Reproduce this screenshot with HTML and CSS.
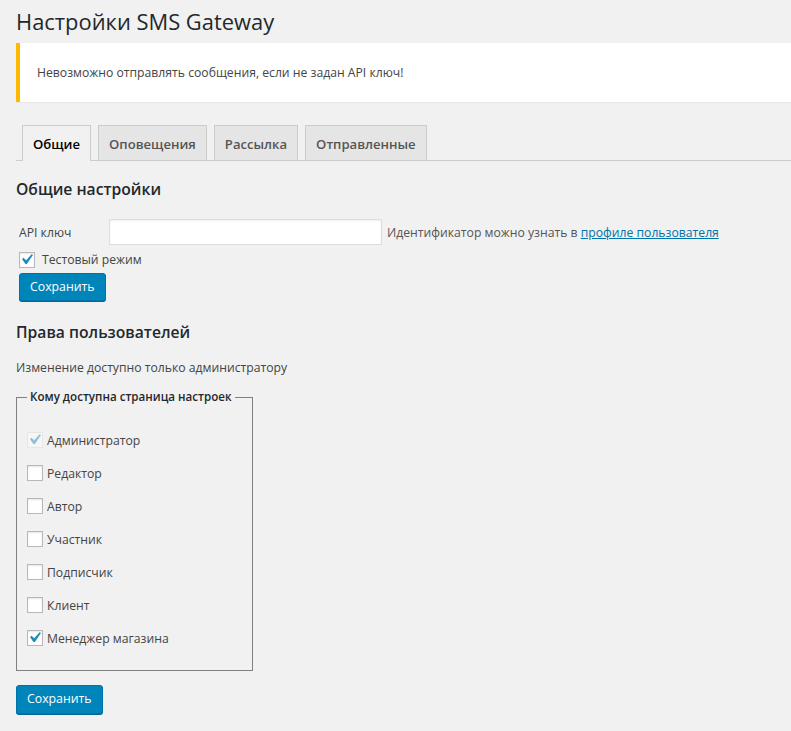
FILE: index.html
```html
<!DOCTYPE html>
<html lang="ru">
<head>
<meta charset="utf-8">
<title>Настройки SMS Gateway</title>
<link rel="stylesheet" href="styles.css">
</head>
<body>
<div class="wrap">
  <h1 class="page-title">Настройки SMS Gateway</h1>
  <div class="notice"><p>Невозможно отправлять сообщения, если не задан API ключ!</p></div>

  <nav class="tabs">
    <a class="tab active">Общие</a>
    <a class="tab">Оповещения</a>
    <a class="tab">Рассылка</a>
    <a class="tab">Отправленные</a>
  </nav>

  <h2 class="section-title first">Общие настройки</h2>
  <div class="form-block">
    <div class="field-row">
      <label class="field-label">API ключ</label>
      <input class="text-input" type="text">
      <span class="hint">Идентификатор можно узнать в <a class="link" href="#">профиле пользователя</a></span>
    </div>
    <label class="check-row small">
      <span class="cb checked"><svg viewBox="0 0 20 20"><path d="M14.83 4.89l1.34.94-5.81 8.38H9.02L5.78 9.67l1.34-1.25 2.57 2.4z"/></svg></span>
      <span>Тестовый режим</span>
    </label>
    <button class="button-primary">Сохранить</button>
  </div>

  <h2 class="section-title">Права пользователей</h2>
  <p class="desc">Изменение доступно только администратору</p>

  <fieldset class="roles">
    <legend>Кому доступна страница настроек</legend>
    <label class="check-row role"><span class="cb checked disabled"><svg viewBox="0 0 20 20"><path d="M14.83 4.89l1.34.94-5.81 8.38H9.02L5.78 9.67l1.34-1.25 2.57 2.4z"/></svg></span><span>Администратор</span></label>
    <label class="check-row role"><span class="cb"></span><span>Редактор</span></label>
    <label class="check-row role"><span class="cb"></span><span>Автор</span></label>
    <label class="check-row role"><span class="cb"></span><span>Участник</span></label>
    <label class="check-row role"><span class="cb"></span><span>Подписчик</span></label>
    <label class="check-row role"><span class="cb"></span><span>Клиент</span></label>
    <label class="check-row role"><span class="cb checked"><svg viewBox="0 0 20 20"><path d="M14.83 4.89l1.34.94-5.81 8.38H9.02L5.78 9.67l1.34-1.25 2.57 2.4z"/></svg></span><span>Менеджер магазина</span></label>
  </fieldset>

  <button class="button-primary second">Сохранить</button>
</div>
</body>
</html>
```
FILE: styles.css
```css
html, body {
  margin: 0;
  padding: 0;
  background: #f1f1f1;
}
body {
  font-family: "Open Sans", "Noto Sans", sans-serif;
  font-size: 12.2px;
  color: #444;
  line-height: 1.4;
}
.wrap {
  padding: 0 0 20px 16px;
}
.page-title {
  margin: 0;
  padding: 6px 0 0;
  font-size: 21.9px;
  font-weight: 400;
  line-height: 32px;
  color: #23282d;
}
.notice {
  margin: 5px 0 0;
  height: 59px;
  background: #fff;
  border-left: 4px solid #ffb900;
  box-shadow: 0 1px 1px rgba(0,0,0,.04);
  display: flex;
  align-items: center;
  padding: 0 17px;
}
.notice p {
  margin: 0;
  color: #444;
}
.tabs {
  margin-top: 23px;
  border-bottom: 1px solid #ccc;
  display: flex;
  padding-left: 6px;
  gap: 7px;
  height: 35px;
}
.tab {
  display: block;
  border: 1px solid #ccc;
  border-bottom: none;
  background: #e5e5e5;
  padding: 6px 10px 4px;
  font-size: 13.1px;
  font-weight: 600;
  line-height: 24px;
  color: #555;
  height: 24px;
}
.tab.active {
  background: #f1f1f1;
  color: #000;
  height: 25px;
  position: relative;
  z-index: 1;
}
.section-title {
  margin: 0;
  font-size: 15.7px;
  font-weight: 600;
  color: #23282d;
  line-height: 24px;
}
.section-title.first {
  margin-top: 16px;
}
.form-block {
  padding-left: 3px;
  margin-top: 18px;
}
.field-row {
  display: flex;
  align-items: center;
  height: 26px;
}
.field-label {
  width: 90px;
  padding-top: 2px;
  color: #444;
}
.text-input {
  width: 273px;
  height: 26px;
  box-sizing: border-box;
  border: 1px solid #ddd;
  box-shadow: inset 0 1px 2px rgba(0,0,0,.07);
  background: #fff;
  margin: 0;
  padding: 3px 5px;
  font: inherit;
}
.hint {
  margin-left: 5px;
  padding-top: 2px;
  color: #555;
}
.link {
  color: #0073aa;
  text-decoration: underline;
}
.check-row {
  display: flex;
  align-items: center;
  gap: 7px;
  color: #444;
}
.check-row.small {
  margin-top: 7px;
  height: 16px;
}
.cb {
  position: relative;
  display: inline-block;
  width: 16px;
  height: 16px;
  box-sizing: border-box;
  border: 1px solid #b4b9be;
  background: #fff;
  box-shadow: inset 0 1px 2px rgba(0,0,0,.1);
  flex: none;
}
.cb svg {
  position: absolute;
  left: -4px;
  top: -4px;
  width: 21px;
  height: 21px;
  fill: #1e8cbe;
}
.cb.disabled {
  border-color: rgba(222,222,222,.6);
  background: rgba(255,255,255,.4);
  box-shadow: none;
}
.cb.disabled svg {
  fill: #8fc0dd;
}
.button-primary {
  display: block;
  margin-top: 5px;
  height: 28px;
  padding: 0 10px 1px;
  background: #0085ba;
  border: 1px solid #0073aa;
  border-radius: 3px;
  box-shadow: 0 1px 0 #006799;
  color: #fff;
  font: inherit;
  font-size: 12.3px;
  line-height: 26px;
  cursor: pointer;
}
.button-primary.second {
  margin-top: 14px;
  height: 29px;
}
.desc {
  margin: 0;
  padding-top: 15px;
  color: #444;
}
.section-title:not(.first) {
  margin-top: 19px;
}
.roles {
  margin: 13px 0 0;
  width: 237px;
  box-sizing: border-box;
  border: 1px solid #808080;
  padding: 27px 10px 24px;
  display: flex;
  flex-direction: column;
  gap: 17px;
}
.roles legend {
  font-weight: 600;
  font-size: 11.6px;
  color: #23282d;
  padding: 0 3px;
  margin: 0;
  white-space: nowrap;
}
.check-row.role {
  height: 16px;
  gap: 4px;
}
```
